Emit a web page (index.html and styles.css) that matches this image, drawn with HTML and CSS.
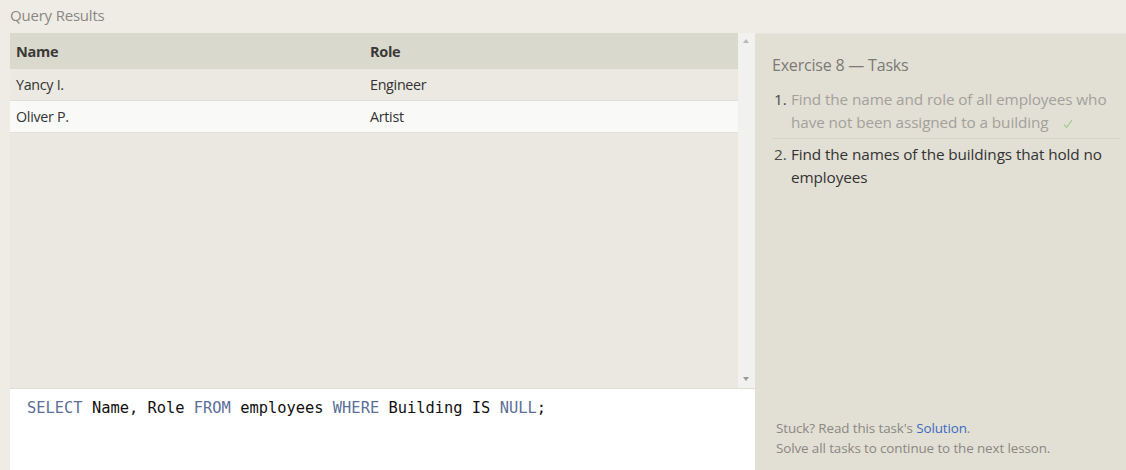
FILE: index.html
```html
<!DOCTYPE html>
<html>
<head>
<meta charset="utf-8">
<link rel="stylesheet" href="styles.css">
</head>
<body>
<div class="app">
  <div class="title">Query Results</div>
  <div class="main">
    <div class="left">
      <div class="results">
        <div class="table-wrap">
          <table class="grid">
            <thead>
              <tr><th class="c1">Name</th><th>Role</th></tr>
            </thead>
            <tbody>
              <tr class="odd"><td class="c1">Yancy I.</td><td>Engineer</td></tr>
              <tr class="even"><td class="c1">Oliver P.</td><td>Artist</td></tr>
            </tbody>
          </table>
        </div>
        <div class="scrollbar">
          <span class="arrow up"></span>
          <span class="arrow down"></span>
        </div>
      </div>
      <div class="editor"><span class="kw">SELECT</span> Name, Role <span class="kw">FROM</span> employees <span class="kw">WHERE</span> Building IS <span class="kw">NULL</span>;</div>
    </div>
    <div class="right">
      <div class="tasks-title">Exercise 8 — Tasks</div>
      <ul class="tasks">
        <li class="task done"><span class="num">1.</span><span class="text">Find the name and role of all employees who have not been assigned to a building<svg class="check" width="10" height="10" viewBox="0 0 10 10"><path d="M1 5.6 L3.6 8.4 L9 1" fill="none" stroke="#9ccb8f" stroke-width="1.2"/></svg></span></li>
        <li class="task current"><span class="num">2.</span><span class="text">Find the names of the buildings that hold no employees</span></li>
      </ul>
      <div class="footer">
        <div>Stuck? Read this task's <a class="link">Solution</a>.</div>
        <div>Solve all tasks to continue to the next lesson.</div>
      </div>
    </div>
  </div>
</div>
</body>
</html>
```
FILE: styles.css
```css
html, body {
  margin: 0;
  padding: 0;
}
body {
  background: #efece6;
  font-family: "Open Sans", "Noto Sans", sans-serif;
  width: 1126px;
  height: 470px;
  overflow: hidden;
}
.app {
  display: flex;
  flex-direction: column;
  height: 470px;
}
.title {
  height: 33px;
  box-sizing: border-box;
  padding: 5px 0 0 10px;
  font-size: 15px;
  color: #8a8883;
  letter-spacing: -0.2px;
}
.main {
  display: flex;
  flex: 1;
  min-height: 0;
}
.left {
  width: 745px;
  margin-left: 10px;
  display: flex;
  flex-direction: column;
}
.results {
  height: 356px;
  display: flex;
  background: #eae8e0;
  border-bottom: 1px solid #dedcd3;
  box-sizing: border-box;
}
.table-wrap {
  flex: 1;
}
.grid {
  width: 100%;
  border-collapse: collapse;
  font-size: 14.3px;
  color: #333;
  letter-spacing: -0.3px;
}
.grid th {
  background: #dad9cd;
  height: 36px;
  text-align: left;
  font-weight: 700;
  font-size: 14.5px;
  color: #3a3a38;
  padding: 0 0 0 6px;
}
.grid td {
  height: 31px;
  padding: 0 0 0 6px;
}
.grid .c1 {
  width: 348px;
}
.grid tr.odd td {
  background: #ebe9e2;
  border-bottom: 1px solid #e0ded6;
}
.grid tr.even td {
  background: #f9f9f8;
  border-bottom: 1px solid #e3e1da;
}
.scrollbar {
  width: 17px;
  background: #f1f1f0;
  position: relative;
}
.arrow {
  position: absolute;
  left: 5px;
  width: 0;
  height: 0;
  border-left: 3.5px solid transparent;
  border-right: 3.5px solid transparent;
}
.arrow.up {
  top: 6px;
  border-bottom: 4px solid #b9b9b9;
}
.arrow.down {
  bottom: 7px;
  border-top: 4px solid #9a9a9a;
}
.editor {
  flex: 1;
  background: #fff;
  font-family: "DejaVu Sans Mono", "Liberation Mono", monospace;
  font-size: 15.4px;
  color: #111;
  padding: 10px 0 0 17px;
  white-space: pre;
  box-sizing: border-box;
}
.kw {
  color: #5c6f98;
}
.right {
  flex: 1;
  background: #e2dfd4;
  padding: 20px 6px 0 17px;
  display: flex;
  flex-direction: column;
  border-top: 1px solid #e6e3da;
  box-sizing: border-box;
}
.tasks-title {
  font-size: 16px;
  color: #7b7a76;
  letter-spacing: -0.2px;
  margin-bottom: 12px;
}
.tasks {
  margin: 0;
  padding: 0;
  list-style: none;
  font-size: 15.3px;
  line-height: 23px;
  letter-spacing: -0.1px;
}
.task {
  display: flex;
}
.num {
  width: 19px;
  flex: none;
  padding-left: 2px;
  box-sizing: border-box;
  color: #4a4a48;
}
.text {
  flex: 1;
}
.task.done {
  color: #a2a19c;
  border-bottom: 1px solid #d6d3c8;
  padding-bottom: 4px;
}
.task.current {
  color: #333;
  padding-top: 4px;
}
.check {
  margin-left: 15px;
  vertical-align: -1px;
}
.footer {
  margin-top: auto;
  padding: 0 0 12px 4px;
  font-size: 13.4px;
  line-height: 20px;
  color: #8a8883;
  letter-spacing: -0.1px;
}
.link {
  color: #3d6ac2;
}
```
